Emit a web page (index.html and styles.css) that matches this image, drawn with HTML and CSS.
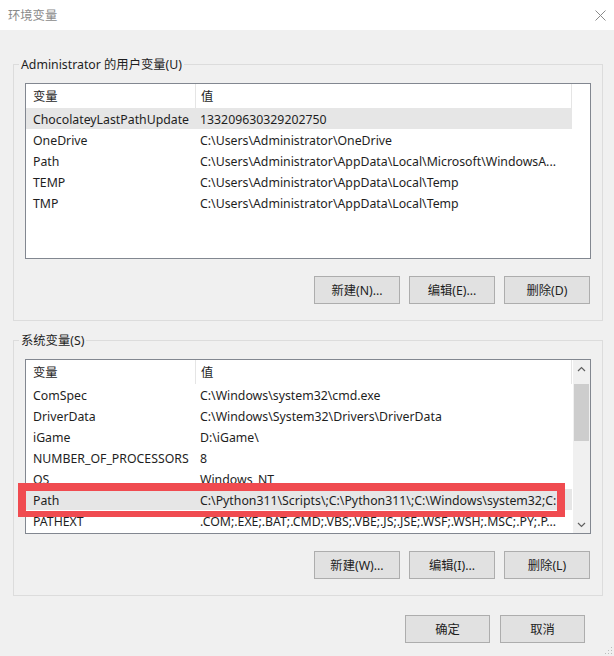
FILE: index.html
```html
<!DOCTYPE html>
<html lang="zh-CN">

<head>
    <meta charset="UTF-8">
    <meta name="viewport" content="width=device-width, initial-scale=1.0">
    <title>环境变量</title>
    <link rel="stylesheet" href="styles.css">
</head>

<body>
    <div class="window">
        <!-- Title bar -->
        <div class="titlebar">
            <span class="title">环境变量</span>
            <svg class="close" viewBox="0 0 11 11" width="11" height="11">
                <path d="M0.5 0.5 L10.5 10.5 M10.5 0.5 L0.5 10.5" stroke="#8a8a8a" stroke-width="1" fill="none"/>
            </svg>
        </div>

        <div class="content">
            <!-- User variables -->
            <fieldset class="group">
                <legend>Administrator 的用户变量(U)</legend>
                <div class="list list-user">
                    <div class="list-body">
                        <div class="list-head">
                            <div class="col name">变量</div>
                            <div class="col value">值</div>
                        </div>
                        <div class="row selected"><div class="col name">ChocolateyLastPathUpdate</div><div class="col value">133209630329202750</div></div>
                        <div class="row"><div class="col name">OneDrive</div><div class="col value">C:\Users\Administrator\OneDrive</div></div>
                        <div class="row"><div class="col name">Path</div><div class="col value">C:\Users\Administrator\AppData\Local\Microsoft\WindowsA...</div></div>
                        <div class="row"><div class="col name">TEMP</div><div class="col value">C:\Users\Administrator\AppData\Local\Temp</div></div>
                        <div class="row"><div class="col name">TMP</div><div class="col value">C:\Users\Administrator\AppData\Local\Temp</div></div>
                    </div>
                </div>
                <div class="actions">
                    <button class="btn">新建(N)...</button>
                    <button class="btn">编辑(E)...</button>
                    <button class="btn">删除(D)</button>
                </div>
            </fieldset>

            <!-- System variables -->
            <fieldset class="group group-system">
                <legend>系统变量(S)</legend>
                <div class="list list-system">
                    <div class="list-body">
                        <div class="list-head">
                            <div class="col name">变量</div>
                            <div class="col value">值</div>
                        </div>
                        <div class="row"><div class="col name">ComSpec</div><div class="col value">C:\Windows\system32\cmd.exe</div></div>
                        <div class="row"><div class="col name">DriverData</div><div class="col value">C:\Windows\System32\Drivers\DriverData</div></div>
                        <div class="row"><div class="col name">iGame</div><div class="col value">D:\iGame\</div></div>
                        <div class="row"><div class="col name">NUMBER_OF_PROCESSORS</div><div class="col value">8</div></div>
                        <div class="row"><div class="col name">OS</div><div class="col value">Windows_NT</div></div>
                        <div class="row selected"><div class="col name">Path</div><div class="col value">C:\Python311\Scripts\;C:\Python311\;C:\Windows\system32;C:</div></div>
                        <div class="row"><div class="col name">PATHEXT</div><div class="col value">.COM;.EXE;.BAT;.CMD;.VBS;.VBE;.JS;.JSE;.WSF;.WSH;.MSC;.PY;.P...</div></div>
                    </div>
                    <div class="scrollbar">
                        <div class="arrow">
                            <svg viewBox="0 0 9 6" width="9" height="6"><polyline points="1,5 4.5,1.5 8,5" stroke="#606060" stroke-width="1.2" fill="none"/></svg>
                        </div>
                        <div class="thumb"></div>
                        <div class="arrow arrow-down">
                            <svg viewBox="0 0 9 6" width="9" height="6"><polyline points="1,1 4.5,4.5 8,1" stroke="#606060" stroke-width="1.2" fill="none"/></svg>
                        </div>
                    </div>
                </div>
                <div class="actions">
                    <button class="btn">新建(W)...</button>
                    <button class="btn">编辑(I)...</button>
                    <button class="btn">删除(L)</button>
                </div>
            </fieldset>

            <div class="dialog-actions">
                <button class="btn btn-dialog">确定</button>
                <button class="btn btn-dialog">取消</button>
            </div>
        </div>

        <!-- Annotation over the Path row -->
        <div class="highlight"></div>

        <svg class="grip" viewBox="0 0 8 8" width="8" height="8">
            <rect x="6" y="0" width="1" height="1" fill="#bbb"/>
            <rect x="3" y="3" width="1" height="1" fill="#bbb"/>
            <rect x="6" y="3" width="1" height="1" fill="#bbb"/>
            <rect x="0" y="6" width="1" height="1" fill="#bbb"/>
            <rect x="3" y="6" width="1" height="1" fill="#bbb"/>
            <rect x="6" y="6" width="1" height="1" fill="#bbb"/>
        </svg>
    </div>
</body>
</html>
```

FILE: styles.css
```css
body {
    margin: 0;
    padding: 0;
    background-color: #F0F0F0;
    font-family: 'Noto Sans', 'Noto Sans CJK SC', sans-serif;
    font-size: 12.3px;
    color: #1E1E1E;
}

.window {
    position: relative;
    width: 614px;
    height: 656px;
    overflow: hidden;
}

.titlebar {
    display: flex;
    align-items: center;
    justify-content: space-between;
    height: 30px;
    padding: 0 8px;
    background-color: #FFFFFF;
}

.title {
    color: #8A8A8A;
}

.content {
    padding: 26px 11px 0 13px;
}

.group {
    margin: 0;
    min-width: 0;
    padding: 10px 11px 16px 11px;
    border: 1px solid #DCDCDC;
}

.group legend {
    margin-left: -6px;
    padding: 0 2px;
    line-height: 17px;
}

.group-system {
    margin-top: 11px;
}

.list {
    display: flex;
    box-sizing: border-box;
    height: 176px;
    border: 1px solid #828790;
    background-color: #FFFFFF;
    overflow: hidden;
}

.list-system {
    height: 175px;
}

.list-body {
    flex: 1;
    overflow: hidden;
}

.list-head {
    display: flex;
    height: 24px;
}

.list-head .col {
    line-height: 26px;
}

.list-head .value {
    border-left: 1px solid #E5E5E5;
    border-right: 1px solid #E5E5E5;
}

.row {
    display: flex;
    height: 21px;
    line-height: 23px;
    width: 546px;
}

.row.selected {
    background-color: #E6E6E6;
}

.col {
    box-sizing: border-box;
    white-space: nowrap;
    overflow: hidden;
}

.col.name {
    width: 169px;
    padding-left: 7px;
}

.col.value {
    width: 377px;
    padding-left: 5px;
}

.scrollbar {
    display: flex;
    flex-direction: column;
    width: 17px;
    background-color: #F0F0F0;
}

.arrow {
    display: flex;
    align-items: center;
    justify-content: center;
    height: 17px;
}

.arrow-down {
    margin-top: auto;
}

.thumb {
    margin: 7px 1px 0 1px;
    height: 57px;
    background-color: #CDCDCD;
}

.actions {
    display: flex;
    justify-content: flex-end;
    gap: 9px;
    margin-top: 17px;
    margin-right: 1px;
}

.btn {
    box-sizing: border-box;
    width: 86px;
    height: 28px;
    padding: 0;
    background-color: #E1E1E1;
    border: 1px solid #ADADAD;
    font-family: inherit;
    font-size: 12.3px;
    color: #1E1E1E;
}

.dialog-actions {
    display: flex;
    justify-content: flex-end;
    gap: 10px;
    margin-top: 19px;
    padding-right: 18px;
}

.btn-dialog {
    width: 85px;
}

.highlight {
    position: absolute;
    left: 18px;
    top: 483px;
    width: 547px;
    height: 34px;
    box-sizing: border-box;
    border-style: solid;
    border-color: #F04B50;
    border-width: 8px 8px 6px 8px;
}

.grip {
    position: absolute;
    right: 1px;
    bottom: 1px;
}
```
